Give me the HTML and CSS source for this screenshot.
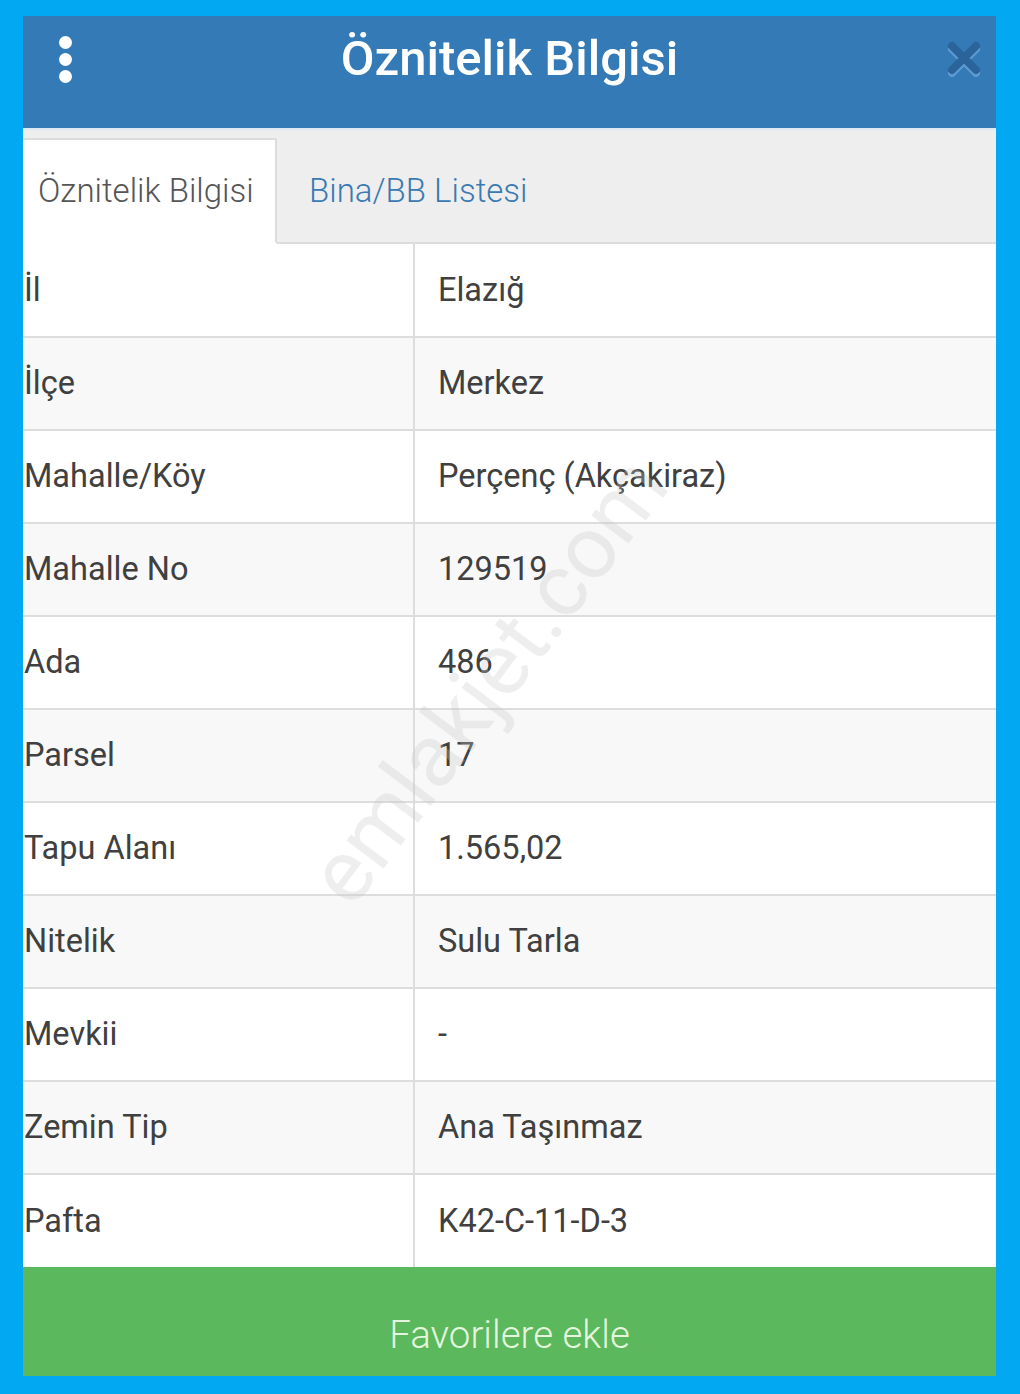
FILE: index.html
```html
<!DOCTYPE html>
<html lang="tr">
<head>
    <meta charset="UTF-8">
    <meta name="viewport" content="width=device-width, initial-scale=1.0">
    <title>Öznitelik Bilgisi</title>
    <link rel="stylesheet" href="styles.css">
</head>
<body>
    <div class="modal">
        <div class="modal-header">
            <button class="menu-btn" aria-label="Menü">
                <span></span><span></span><span></span>
            </button>
            <h1>Öznitelik Bilgisi</h1>
            <button class="close-btn" aria-label="Kapat">
                <svg width="40" height="40" viewBox="0 0 40 40">
                    <g stroke-linecap="round" stroke-width="8">
                        <path d="M8 10 L32 34 M32 10 L8 34" stroke="#5d9bd3"/>
                        <path d="M8 7 L32 31 M32 7 L8 31" stroke="#2a649a"/>
                    </g>
                </svg>
            </button>
        </div>

        <div class="tabs">
            <div class="tab active">Öznitelik Bilgisi</div>
            <div class="tab">Bina/BB Listesi</div>
        </div>

        <table class="info-table">
            <tr><td>İl</td><td>Elazığ</td></tr>
            <tr><td>İlçe</td><td>Merkez</td></tr>
            <tr><td>Mahalle/Köy</td><td>Perçenç (Akçakiraz)</td></tr>
            <tr><td>Mahalle No</td><td>129519</td></tr>
            <tr><td>Ada</td><td>486</td></tr>
            <tr><td>Parsel</td><td>17</td></tr>
            <tr><td>Tapu Alanı</td><td>1.565,02</td></tr>
            <tr><td>Nitelik</td><td>Sulu Tarla</td></tr>
            <tr><td>Mevkii</td><td>-</td></tr>
            <tr><td>Zemin Tip</td><td>Ana Taşınmaz</td></tr>
            <tr><td>Pafta</td><td>K42-C-11-D-3</td></tr>
        </table>

        <button class="fav-btn">Favorilere ekle</button>

        <div class="watermark">emlakjet.com</div>
    </div>
</body>
</html>
```

FILE: styles.css
```css
* {
    margin: 0;
    padding: 0;
    box-sizing: border-box;
    font-family: Roboto, 'Noto Sans', sans-serif;
}

body {
    background: #02a8f2;
    min-height: 100vh;
    padding: 16px 24px 17px 23px;
}

.modal {
    position: relative;
    width: 973px;
    background: #fff;
    overflow: hidden;
}

.modal-header {
    display: flex;
    align-items: center;
    justify-content: center;
    position: relative;
    height: 114px;
    background: #337ab7;
    border-bottom: 2px solid #dfe9f3;
}

.modal-header h1 {
    color: #fff;
    font-size: 49px;
    font-weight: 500;
    margin-top: -28px;
}

.menu-btn {
    position: absolute;
    left: 36px;
    top: 20px;
    display: flex;
    flex-direction: column;
    gap: 4px;
    background: none;
    border: none;
}

.menu-btn span {
    width: 13px;
    height: 13px;
    border-radius: 50%;
    background: #fff;
}

.close-btn {
    position: absolute;
    right: 12px;
    top: 23px;
    background: none;
    border: none;
}

.tabs {
    display: flex;
    align-items: flex-end;
    height: 114px;
    background: #eee;
    border-bottom: 2px solid #ddd;
}

.tab {
    height: 106px;
    display: flex;
    align-items: center;
    padding: 0 31px 2px 32px;
    font-size: 33px;
    font-weight: 300;
    color: #3a7ab2;
    white-space: nowrap;
    margin-bottom: -2px;
}

.tab.active {
    width: 254px;
    padding-left: 15px;
    padding-right: 0;
    color: #555;
    background: #fff;
    border: 2px solid #ddd;
    border-left: none;
    border-bottom-color: #fff;
}

.info-table {
    width: 100%;
    border-collapse: collapse;
}

.info-table td {
    height: 93px;
    font-size: 32.5px;
    color: #404040;
    border-bottom: 2px solid #ddd;
    vertical-align: middle;
    padding-bottom: 1px;
}

.info-table tr:last-child td {
    border-bottom: none;
}

.info-table td:first-child {
    width: 391px;
    padding-left: 1px;
    border-right: 2px solid #ddd;
}

.info-table td:last-child {
    padding-left: 23px;
}

.info-table tr:nth-child(even) {
    background: #f8f8f8;
}

.fav-btn {
    display: block;
    width: 100%;
    height: 109px;
    border: none;
    background: #5cb85c;
    color: #e4f6de;
    font-size: 38.5px;
    font-weight: 300;
    padding-top: 26px;
}

/* faint site stamp across the table */
.watermark {
    position: absolute;
    left: 205px;
    top: 625px;
    width: 500px;
    text-align: center;
    font-size: 88px;
    font-weight: 400;
    color: rgba(200, 200, 200, 0.3);
    transform: rotate(-53deg);
    pointer-events: none;
}
```
